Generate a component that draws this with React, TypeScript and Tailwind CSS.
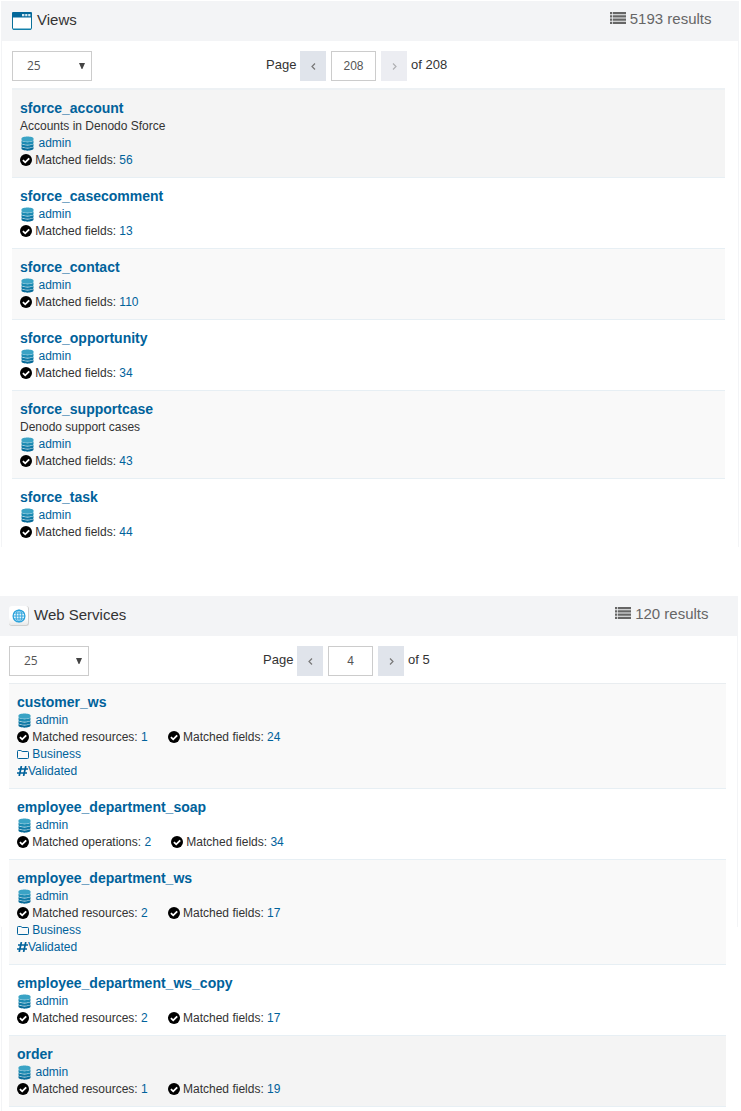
import type { ReactNode } from "react";

type Match = { label: string; count: number };
type Item = {
  name: string;
  description?: string;
  matches: Match[];
  category?: string;
  tag?: string;
  tone: string;
};

const fields = (count: number): Match => ({ label: "Matched fields:", count });
const resources = (count: number): Match => ({ label: "Matched resources:", count });

const views: Item[] = [
  { name: "sforce_account", description: "Accounts in Denodo Sforce", matches: [fields(56)], tone: "bg-[#f4f4f4]" },
  { name: "sforce_casecomment", matches: [fields(13)], tone: "bg-white" },
  { name: "sforce_contact", matches: [fields(110)], tone: "bg-[#f9f9f9]" },
  { name: "sforce_opportunity", matches: [fields(34)], tone: "bg-white" },
  { name: "sforce_supportcase", description: "Denodo support cases", matches: [fields(43)], tone: "bg-[#f9f9f9]" },
];

const lastView: Item = { name: "sforce_task", matches: [fields(44)], tone: "bg-white" };

const services: Item[] = [
  { name: "customer_ws", matches: [resources(1), fields(24)], category: "Business", tag: "Validated", tone: "bg-[#f9f9f9]" },
  { name: "employee_department_soap", matches: [{ label: "Matched operations:", count: 2 }, fields(34)], tone: "bg-white" },
  { name: "employee_department_ws", matches: [resources(2), fields(17)], category: "Business", tag: "Validated", tone: "bg-[#f9f9f9]" },
  { name: "employee_department_ws_copy", matches: [resources(2), fields(17)], tone: "bg-white" },
  { name: "order", matches: [resources(1), fields(19)], tone: "bg-[#f4f4f4]" },
];

function WindowIcon() {
  return (
    <svg width="20" height="18" viewBox="0 0 20 18" className="block">
      <rect x="0.5" y="0.5" width="19" height="17" rx="1.2" fill="#fff" stroke="#0a7099" />
      <path d="M0 1.2Q0 0 1.2 0H18.8Q20 0 20 1.2V5.5H0Z" fill="#04689a" />
      <path d="M10 2h2.4v2.2H10zM13.2 2h2.2v2.2h-2.2zM16.2 2h2.2v2.2h-2.2z" fill="#d5e8f1" />
      <path d="M1 17.2H19" stroke="#1583ad" strokeWidth="1.4" />
    </svg>
  );
}

function GlobeIcon() {
  return (
    <span className="flex size-5 items-center justify-center rounded-[3px] border-r border-b border-[#cfcfcf] bg-linear-to-b from-white from-60% to-[#e9e9e9]">
      <svg width="14" height="14" viewBox="0 0 14 14" fill="none" stroke="#2ba3dc">
        <circle cx="7" cy="7" r="5.9" strokeWidth="1.3" fill="#e4f4fc" />
        <ellipse cx="7" cy="7" rx="2.9" ry="5.9" />
        <path d="M7 1V13M1 7H13M2 4.1H12M2 9.9H12" strokeWidth="0.9" />
      </svg>
    </span>
  );
}

function ListIcon() {
  return (
    <svg width="16" height="12" viewBox="0 0 16 12" fill="#666" className="block">
      <path d="M0 0h2.3v2.3H0zM3 0h13v2.3H3zM0 3.2h2.3v2.4H0zM3 3.2h13v2.4H3zM0 6.4h2.3v2.4H0zM3 6.4h13v2.4H3zM0 9.7h2.3V12H0zM3 9.7h13V12H3z" />
    </svg>
  );
}

function DatabaseIcon() {
  return (
    <svg width="13" height="15" viewBox="0 0 13 15" className="block">
      <path d="M0.5 2.6C0.5 -0.2 12.5 -0.2 12.5 2.6V4C12.5 6.4 0.5 6.4 0.5 4Z" fill="#3aa3c5" />
      <path d="M0.5 4.8C2.5 6.7 10.5 6.7 12.5 4.8V7.2C12.5 9.3 0.5 9.3 0.5 7.2Z" fill="#1d8bb3" />
      <path d="M0.5 8C2.5 9.9 10.5 9.9 12.5 8V10.2C12.5 12.3 0.5 12.3 0.5 10.2Z" fill="#0f7aa6" />
      <path d="M0.5 11C2.5 12.9 10.5 12.9 12.5 11V12.6C12.5 15.4 0.5 15.4 0.5 12.6Z" fill="#066a98" />
    </svg>
  );
}

function CheckIcon() {
  return (
    <svg width="12" height="12" viewBox="0 0 12 12" className="block">
      <circle cx="6" cy="6" r="6" fill="#000" />
      <path d="M2.9 6.1L5.2 8.3L9.2 4.3" fill="none" stroke="#fff" strokeWidth="1.8" />
    </svg>
  );
}

function FolderIcon() {
  return (
    <svg width="12" height="9" viewBox="0 0 12 9" fill="none" stroke="#00629b" className="block">
      <path d="M0.5 7.7V1.3Q0.5 0.5 1.3 0.5H3.8Q4.5 0.5 4.6 1.1Q4.7 1.5 5.2 1.5H10.7Q11.5 1.5 11.5 2.3V7.7Q11.5 8.5 10.7 8.5H1.3Q0.5 8.5 0.5 7.7Z" />
    </svg>
  );
}

function HashIcon() {
  return (
    <svg width="11" height="10" viewBox="0 0 11 10" fill="none" stroke="#00629b" strokeWidth="1.7" className="block">
      <path d="M4.4 0L2.2 10M8.8 0L6.6 10M1 3H11M0 7H10" />
    </svg>
  );
}

function SectionHeader({ icon, title, results }: { icon: ReactNode; title: string; results: string }) {
  return (
    <header className="flex h-10 items-start justify-between bg-[#f3f4f6] text-[15px] leading-[18px]">
      <div className="flex pt-[10px] text-[#333]">
        {icon}
        <h2>{title}</h2>
      </div>
      <div className="flex gap-[4px] pt-[9px] text-[#666]">
        <span className="pt-[2px]">
          <ListIcon />
        </span>
        <span>{results}</span>
      </div>
    </header>
  );
}

function Chevron({ right = false }: { right?: boolean }) {
  return (
    <svg width="5" height="7" viewBox="0 0 5 7" fill="none" stroke="currentColor" strokeWidth="1.2">
      <path d={right ? "M1 0.5L4 3.5L1 6.5" : "M4 0.5L1 3.5L4 6.5"} />
    </svg>
  );
}

function Toolbar({ page, total, atEnd = false }: { page: number; total: number; atEnd?: boolean }) {
  return (
    <div className="flex h-[47px] items-start pt-[10px] text-[13px] text-[#333]">
      <button className="flex h-[30px] w-20 items-center justify-between border border-[#ccc] bg-white pr-[6px] pl-[14px] text-[12px] text-[#555]">
        <span className="font-['Open_Sans',sans-serif]">25</span>
        <svg width="6" height="6" viewBox="0 0 6 6" fill="#444">
          <path d="M0 0H6L3.4 6H2.6Z" />
        </svg>
      </button>
      <span className="ml-[174px] w-[34px] leading-[27px]">Page</span>
      <button className="flex h-[30px] w-[26px] items-center justify-center bg-[#e0e4eb] text-[#777]">
        <Chevron />
      </button>
      <span className="mx-[5px] flex h-[30px] w-[45px] items-center justify-center border border-[#ccc] text-[12px] text-[#555]">
        {page}
      </span>
      <button
        className={
          atEnd
            ? "flex h-[30px] w-[26px] items-center justify-center bg-[#ecedf2] text-[#b0b0b4]"
            : "flex h-[30px] w-[26px] items-center justify-center bg-[#e0e4eb] text-[#777]"
        }
      >
        <Chevron right />
      </button>
      <span className="ml-1 leading-[27px]">of {total}</span>
    </div>
  );
}

function Row({ item, last = false }: { item: Item; last?: boolean }) {
  return (
    <li className={`${item.tone} ${last ? "" : "border-b border-[#e7eff4]"} px-2 pt-[9px] pb-[8px] text-[12px] leading-[17px] text-[#333]`}>
      <h3 className="h-[19px] text-[14px] leading-[18px] font-bold text-[#00629b]">{item.name}</h3>
      {item.description && <p>{item.description}</p>}
      <div className="flex h-[17px] pl-[1px] text-[#00629b]">
        <span className="w-[17.5px] pt-[1px]">
          <DatabaseIcon />
        </span>
        admin
      </div>
      <div className="flex h-[17px] gap-5">
        {item.matches.map((m) => (
          <span key={m.label} className="flex">
            <span className="w-[15.3px] pt-[2px]">
              <CheckIcon />
            </span>
            <span className="whitespace-pre">
              {m.label} <span className="text-[#00629b]">{m.count}</span>
            </span>
          </span>
        ))}
      </div>
      {item.category && (
        <div className="flex text-[#00629b]">
          <span className="w-[15.3px] pt-[4px]">
            <FolderIcon />
          </span>
          {item.category}
        </div>
      )}
      {item.tag && (
        <div className="flex text-[#00629b]">
          <span className="w-[11px] pt-[3px]">
            <HashIcon />
          </span>
          {item.tag}
        </div>
      )}
    </li>
  );
}

export default function App() {
  return (
    <main className="h-[1111px] w-[741px] overflow-hidden bg-white pt-px font-['Liberation_Sans',Arial,sans-serif]">
      <section className="ml-px h-[546px] w-[738px]">
        <div className="[&>header]:pr-[27.5px] [&>header]:pl-[11px]">
          <SectionHeader
            icon={
              <span className="mr-[5px] pt-[1px]">
                <WindowIcon />
              </span>
            }
            title="Views"
            results="5193 results"
          />
        </div>
        <div className="h-[506px] border-x border-[#f3f4f6] pr-[13px] pl-[10px]">
          <Toolbar page={208} total={208} atEnd />
          <ul className="border-t-2 border-[#edf1f4]">
            {views.map((v) => (
              <Row key={v.name} item={v} />
            ))}
            <Row item={lastView} last />
          </ul>
        </div>
      </section>
      <section className="mt-[49px] w-[738px]">
        <div className="[&>header]:pr-[29.5px] [&>header]:pl-[9px]">
          <SectionHeader
            icon={
              <span className="mr-[5px]">
                <GlobeIcon />
              </span>
            }
            title="Web Services"
            results="120 results"
          />
        </div>
        <div className="flex">
          <div className="flex w-[9px] flex-col items-end pr-[7px] pt-[291px]">
            <span className="h-[184px] w-px bg-[#f3f4f6]" />
          </div>
          <div className="w-[717px]">
            <Toolbar page={4} total={5} />
            <ul className="border-t border-[#e9edf0]">
              {services.map((s) => (
                <Row key={s.name} item={s} />
              ))}
            </ul>
          </div>
          <div className="flex w-3 justify-end">
            <span className="h-[291px] w-px bg-[#f3f4f6]" />
          </div>
        </div>
      </section>
    </main>
  );
}
